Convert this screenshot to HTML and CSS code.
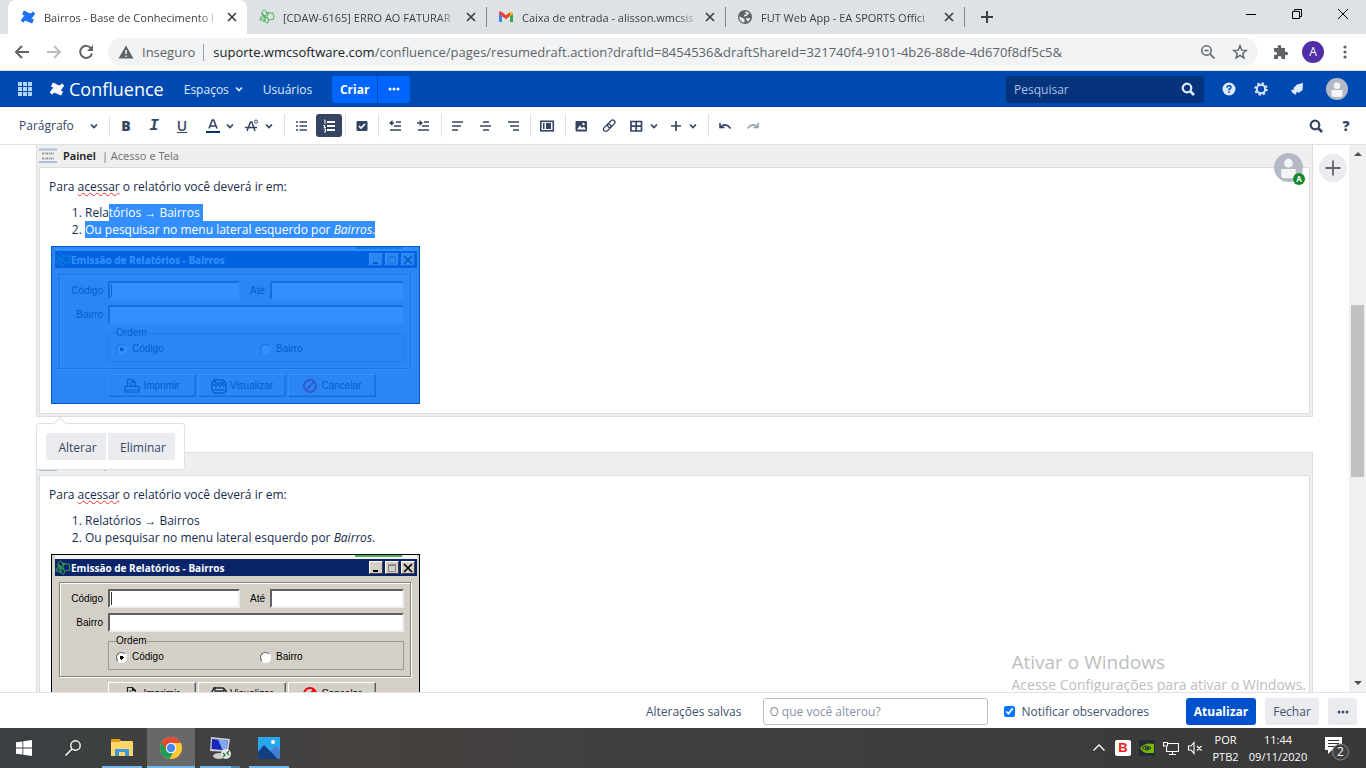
FILE: index.html
```html
<!DOCTYPE html>
<html lang="pt-BR">
<head>
<meta charset="utf-8">
<title>Bairros - Base de Conhecimento</title>
<link rel="stylesheet" href="styles.css">
</head>
<body>
<svg class="defs" aria-hidden="true">
  <symbol id="confluence" viewBox="0 0 16 16"><path d="M.8 11.6 2.7 8.500C4.800 5.300 6.900 7 9 8.100l5 2.300-1.800 4.200c-2.600-1.100-5-2.500-6.500-2.900-1.300-.2-1.800.9-2.500 2z"/><path d="m15.200 4.400-1.900 3.100C11.200 10.700 9.100 9 7 7.900L2 5.600l1.800-4.200c2.600 1.100 5 2.500 6.500 2.900 1.300.2 1.800-.9 2.500-2z"/></symbol>
  <symbol id="leaf" viewBox="0 0 16 16"><g fill="none" stroke-width=".9"><path d="M6 7C2 7 2 3 5 1c3 1 4 4 1 6zM6 7C3 6 1 8 1 11c3 1 6-1 5-4zM8 8l1-4 5 0 1 6-5 1zM6 8c-1 3 0 6 3 6 1-2 0-5-3-6zM3 4l3 3M2 10l4-3M7 3l3 1M4 13l3-2"/></g></symbol>
  <symbol id="x" viewBox="0 0 10 10"><path d="m1 1 8 8M9 1 1 9" fill="none" stroke="currentColor" stroke-width="1.700"/></symbol>
  <symbol id="chev" viewBox="0 0 8 8"><path d="m1 2.500 3 3 3-3" fill="none" stroke="currentColor" stroke-width="1.700"/></symbol>
  <symbol id="mag" viewBox="0 0 16 16"><path d="m10.500 10.500 3.500 3.500" stroke="currentColor" stroke-width="2.600"/><circle cx="7" cy="7" r="4.300" fill="none" stroke="currentColor" stroke-width="2.200"/></symbol>
  <symbol id="person" viewBox="0 0 30 30"><circle cx="15" cy="15" r="15" fill="#b3bac5"/><circle cx="15" cy="10.500" r="4.500" fill="#f4f5f7"/><path d="M7.500 16.500h15v6.500q0 3-3 3h-9q-3 0-3-3z" fill="#f4f5f7"/></symbol>
  <symbol id="printer" viewBox="0 0 16 16"><path d="M3.500 8.500V1.500h5l3 3v4M8.500 1.500v3h3M5.500 5h2M5.500 7h4M1 8.500h14v5.500H1zM1 12h14" fill="#d4d0c8" stroke="#222" stroke-width="1.200"/><path d="M2 12.800h12" stroke="#a77"/></symbol>
  <symbol id="preview" viewBox="0 0 16 16"><path d="M3 2h9l3 3v8l-3 2H3l-2-3V6z" fill="#eee" stroke="#222" stroke-width="1.600"/><path d="M4 1v4h9V2M2 7h12M4 9h2m2 0h2m2 0h1M3 12h10" fill="none" stroke="#222" stroke-width="1.300"/></symbol>
  <symbol id="forbid" viewBox="0 0 16 16"><g fill="none" stroke="#f00000" stroke-width="2"><circle cx="8" cy="8" r="6"/><path d="m12 4-8 8"/></g></symbol>
  <symbol id="min" viewBox="0 0 10 10"><path d="M2 8h5" stroke="#000" stroke-width="2"/></symbol>
  <symbol id="max" viewBox="0 0 10 10"><path d="M1.500 1.500h7v7h-7zM1 2.500h8" fill="none" stroke="#888"/></symbol>
</svg>

<header class="tabs">
  <div class="tab active"><svg class="i16 blue"><use href="#confluence"/></svg><span>Bairros - Base de Conhecimento I</span><button aria-label="Fechar guia"><svg><use href="#x"/></svg></button></div>
  <div class="tab"><svg class="i16 green"><use href="#leaf"/></svg><span>[CDAW-6165] ERRO AO FATURAR</span><button aria-label="Fechar guia"><svg><use href="#x"/></svg></button></div>
  <div class="tab sep"><svg class="i16" viewBox="0 0 16 16"><path d="M1 4v9h3V7z" fill="#4285f4"/><path d="M15 4v9h-3V7z" fill="#34a853"/><path d="M1 3.500Q2.500 1.500 4 3l4 3.300L12 3v4l-4 3.300L1 5z" fill="#ea4335"/><path d="m12 3 3 .500V5l-3 2.300z" fill="#fbbc04"/></svg><span>Caixa de entrada - alisson.wmcsis</span><button aria-label="Fechar guia"><svg><use href="#x"/></svg></button></div>
  <div class="tab sep"><svg class="i16" viewBox="0 0 16 16"><circle cx="8" cy="8" r="7" fill="#5f6368"/><path d="M2.500 7.500 6 9l1.500 1v3.500C4 13.500 2 11 2.500 7.500zM8 2.500c2-.3 4 1 4.700 2.500H11L10 7l-3 .5V5.800h2zM9 9h3.500l.8.800c-.5 1.500-2 2.700-3 3z" fill="#dee1e6"/></svg><span>FUT Web App - EA SPORTS Offici</span><button aria-label="Fechar guia"><svg><use href="#x"/></svg></button></div>
  <button class="newtab" aria-label="Nova guia"><svg class="i16" viewBox="0 0 16 16"><path d="M8 2v12M2 8h12" stroke="#3c4043" stroke-width="2"/></svg></button>
  <div class="winbtns">
    <button aria-label="Minimizar"><svg class="i16" viewBox="0 0 16 16"><path d="M3 8.500h10" stroke="#000"/></svg></button>
    <button aria-label="Restaurar"><svg class="i16" viewBox="0 0 16 16"><path d="M3.500 5.500h7v7h-7zM5.500 5.500v-2h7v7h-2" fill="none" stroke="#000"/></svg></button>
    <button aria-label="Fechar"><svg class="i16" viewBox="0 0 16 16"><path d="m3 3 10 10M13 3 3 13" stroke="#000"/></svg></button>
  </div>
</header>

<nav class="address">
  <button aria-label="Voltar"><svg class="i16" viewBox="0 0 16 16"><path d="M15 8H2m6-6L2 8l6 6" fill="none" stroke="#5f6368" stroke-width="2"/></svg></button>
  <button aria-label="Avançar"><svg class="i16" viewBox="0 0 16 16"><path d="M1 8h13M8 2l6 6-6 6" fill="none" stroke="#babcbe" stroke-width="2"/></svg></button>
  <button aria-label="Recarregar"><svg class="i16" viewBox="0 0 16 16"><path d="M13.200 4.500A6 6 0 1 0 14 9.500" fill="none" stroke="#5f6368" stroke-width="2"/><path d="M15 1v6H9z" fill="#5f6368"/></svg></button>
  <div class="omnibox">
    <svg class="i16" viewBox="0 0 16 16"><path d="M8 1.500 15.500 14.500H.5z" fill="#5f6368"/><path d="M8 6v4M8 11.500v1.500" stroke="#f1f3f4" stroke-width="1.500"/></svg>
    <span class="insecure">Inseguro</span>
    <span class="url"><b>suporte.wmcsoftware.com</b>/confluence/pages/resumedraft.action?draftId=8454536&amp;draftShareId=321740f4-9101-4b26-88de-4d670f8df5c5&amp;</span>
    <button aria-label="Zoom"><svg class="i16" viewBox="0 0 16 16"><circle cx="6.500" cy="6.500" r="4.700" fill="none" stroke="#5f6368" stroke-width="1.500"/><path d="m10 10 4.500 4.500M4.500 6.500h4" stroke="#5f6368" stroke-width="1.700"/></svg></button>
    <button aria-label="Favorito"><svg class="i16" viewBox="0 0 16 16"><path d="m8 1.800 1.700 4.300 4.600.3-3.500 3 1.100 4.500L8 11.400l-3.900 2.500 1.100-4.500-3.500-3 4.600-.3z" fill="none" stroke="#5f6368" stroke-width="1.400"/></svg></button>
  </div>
  <button aria-label="Extensões"><svg class="i16" viewBox="0 0 16 16"><path d="M1 4h4q-1-3 1.500-3T8 4h4v4q3-1 3 1.500T12 11v4H8.500q.5-3-1.800-3T5 15H1v-4q3 .5 3-1.500T1 7.800z" fill="#5f6368"/></svg></button>
  <button aria-label="Perfil"><span class="profile">A</span></button>
  <button aria-label="Menu"><svg class="i16" viewBox="0 0 16 16" fill="#5f6368"><circle cx="8" cy="3" r="1.600"/><circle cx="8" cy="8" r="1.600"/><circle cx="8" cy="13" r="1.600"/></svg></button>
</nav>

<header class="app">
  <button class="grid" aria-label="Aplicativos"><svg class="i16" viewBox="0 0 16 16" fill="#b3d4ff"><path d="M1 1h4v4H1zM6 1h4v4H6zM11 1h4v4h-4zM1 6h4v4H1zM6 6h4v4H6zM11 6h4v4h-4zM1 11h4v4H1zM6 11h4v4H6zM11 11h4v4h-4z"/></svg></button>
  <a class="logo" href="#"><svg class="i16"><use href="#confluence"/></svg>Confluence</a>
  <a href="#">Espaços<svg class="chev"><use href="#chev"/></svg></a>
  <a href="#">Usuários</a>
  <div class="create"><button>Criar</button><button aria-label="Mais"><svg class="i16" viewBox="0 0 16 16" fill="#fff"><circle cx="4" cy="8" r="1.500"/><circle cx="8" cy="8" r="1.500"/><circle cx="12" cy="8" r="1.500"/></svg></button></div>
  <label class="search"><input type="text" placeholder="Pesquisar" aria-label="Pesquisar"><svg class="i16"><use href="#mag"/></svg></label>
  <div class="appicons">
    <button aria-label="Ajuda"><svg class="i16" viewBox="0 0 16 16"><circle cx="8" cy="8" r="6.500" fill="#deebff"/><path d="M6 6.700Q6 4.800 8 4.800t2 1.700Q10 7.700 8 8.300V9.500M8 10.500V12" fill="none" stroke="#0049b0" stroke-width="1.500"/></svg></button>
    <button aria-label="Configurações"><svg class="i16" viewBox="0 0 16 16" fill="none" stroke="#deebff"><circle cx="8" cy="8" r="4.200" stroke-width="2"/><circle cx="8" cy="8" r="5.800" stroke-width="1.800" stroke-dasharray="2.280 2.280"/></svg></button>
    <button class="notice" aria-label="Notificações"><svg class="i16" viewBox="0 0 16 16" fill="#deebff"><path d="m14 2-.5 7-4 3-1.500-1.500L6.500 14 5 12.500 3.500 12 2 9l3-.5L4.500 7 8 3.500z"/></svg></button>
    <button class="account" aria-label="Conta"><svg class="face"><use href="#person"/></svg></button>
  </div>
</header>

<div class="toolbar">
  <button class="format">Parágrafo<svg class="chev"><use href="#chev"/></svg></button>
  <div class="group wide">
    <button class="glyph"><b>B</b></button>
    <button class="glyph mono"><i>I</i></button>
    <button class="glyph"><u>U</u></button>
    <button class="combo spaced" aria-label="Cor"><svg class="i16" viewBox="0 0 16 16"><path d="M4 10.500 7.300 2h1.400L12 10.500M5.500 8h5" fill="none" stroke="currentColor" stroke-width="1.600"/><path d="M1 14h14" stroke="#003366" stroke-width="2"/></svg><svg class="chev"><use href="#chev"/></svg></button>
    <button class="combo" aria-label="Mais formatos"><svg class="i16" viewBox="0 0 16 16" fill="none" stroke="currentColor"><path d="M3 13 6.500 4h1.300L11 13M1 9.500h12" stroke-width="1.400"/><circle cx="12" cy="3.500" r="1.500"/></svg><svg class="chev"><use href="#chev"/></svg></button>
  </div>
  <div class="group">
    <button aria-label="Marcadores"><svg class="i16" viewBox="0 0 16 16"><path d="M3 4h2m1.500 0H14M3 8h2m1.500 0H14M3 12h2m1.500 0H14" stroke="currentColor" stroke-width="1.600"/></svg></button>
    <button class="on" aria-label="Numeração"><svg class="i16" viewBox="0 0 16 16"><path d="M6 4h8M6 8h8M6 12h8" stroke="currentColor" stroke-width="2"/><path d="M3 2h1v4M2.500 7.500H4L3 9.500h2M3 11h1.500v3H3" fill="none" stroke="currentColor"/></svg></button>
  </div>
  <div class="group"><button aria-label="Tarefas"><svg class="i16" viewBox="0 0 16 16"><rect x="2.500" y="3" width="11" height="10" rx="1" fill="currentColor"/><path d="m5 8 2 2 4-4" fill="none" stroke="#fff" stroke-width="1.600"/></svg></button></div>
  <div class="group end">
    <button aria-label="Diminuir recuo"><svg class="i16" viewBox="0 0 16 16"><path d="M9 4h5M7 8h7M3 12h11M3 5h4" stroke="currentColor" stroke-width="1.600"/><path d="M5.500 2v6L2 5z" fill="currentColor"/></svg></button>
    <button aria-label="Aumentar recuo"><svg class="i16" viewBox="0 0 16 16"><path d="M9 4h5M7 8h7M3 12h11M2 5h4" stroke="currentColor" stroke-width="1.600"/><path d="M4.500 2v6L8 5z" fill="currentColor"/></svg></button>
  </div>
  <div class="group">
    <button aria-label="Esquerda"><svg class="i16" viewBox="0 0 16 16"><path d="M2 4h11M2 8h9M2 12h6" stroke="currentColor" stroke-width="1.700"/></svg></button>
    <button aria-label="Centro"><svg class="i16" viewBox="0 0 16 16"><path d="M5 4h6M2 8h11M5 12h6" stroke="currentColor" stroke-width="1.700"/></svg></button>
    <button aria-label="Direita"><svg class="i16" viewBox="0 0 16 16"><path d="M2 4h11M4 8h9M7 12h6" stroke="currentColor" stroke-width="1.700"/></svg></button>
  </div>
  <div class="group end"><button aria-label="Layout"><svg class="i16" viewBox="0 0 16 16"><rect x="1.800" y="3.300" width="12.500" height="9.500" fill="none" stroke="currentColor" stroke-width="1.600"/><path d="M4 5h1.500v6H4zM7 5h5v6H7z" fill="currentColor"/></svg></button></div>
  <div class="group wide">
    <button aria-label="Imagem"><svg class="i16" viewBox="0 0 16 16"><rect x="1.500" y="3" width="11.500" height="10.500" rx="1" fill="currentColor"/><path d="m3 11.500 3-4 2 2.500 2-1.500 2 3z" fill="#fff"/><circle cx="9.500" cy="6" r="1.200" fill="#fff"/></svg></button>
    <button aria-label="Link"><svg class="i16" viewBox="0 0 16 16" fill="none" stroke="currentColor" stroke-width="1.300"><rect x="5" y="3.500" width="8.500" height="4.500" rx="2.200" transform="rotate(-45 9.250 5.750)"/><rect x="1" y="7.500" width="8.500" height="4.500" rx="2.200" transform="rotate(-45 5.250 9.750)"/></svg></button>
    <button class="combo" aria-label="Tabela"><svg class="i16" viewBox="0 0 16 16"><path d="M2 3.500h10.500V13H2zM7.200 3v10M2 8.200h10" fill="none" stroke="currentColor" stroke-width="1.700"/></svg><svg class="chev"><use href="#chev"/></svg></button>
    <button class="combo" aria-label="Inserir"><svg class="i16" viewBox="0 0 16 16"><path d="M8 3v10M3 8h10" stroke="currentColor" stroke-width="1.700"/></svg><svg class="chev"><use href="#chev"/></svg></button>
  </div>
  <div class="group last">
    <button aria-label="Desfazer"><svg class="i16" viewBox="0 0 16 16"><path d="M3 5v4.500h4.500M3.500 9Q9 4 13.500 10.500" fill="none" stroke="currentColor" stroke-width="1.600"/></svg></button>
    <button class="dim" aria-label="Refazer"><svg class="i16" viewBox="0 0 16 16"><path d="M13 5v4.500H8.500M12.500 9Q7 4 2.500 10.500" fill="none" stroke="currentColor" stroke-width="1.600"/></svg></button>
  </div>
  <div class="tools"><button aria-label="Localizar"><svg class="i16"><use href="#mag"/></svg></button><button class="glyph"><b>?</b></button></div>
</div>

<main class="editor">
  <div class="doc">
    <section class="panel first">
      <h2><svg class="macro" viewBox="0 0 18 16"><path d="M0 1.500h18M0 14h18" stroke="#a8c0e0" stroke-width="2"/><path d="M3 5.500h12M3 10.500h12" stroke="#999" stroke-width="2" stroke-dasharray="2 .7 1 .5"/></svg><b>Painel</b><span>| Acesso e Tela</span></h2>
      <div class="body">
        <p>Para <span class="spell">acessar</span> o relatório você deverá ir em:</p>
        <ol><li>Rela<span class="sel">tórios → Bairros&nbsp;</span></li><li><span class="sel">Ou pesquisar no menu lateral esquerdo por <i>Bairros</i>.</span></li></ol>
        <div class="shot selected">
          <div class="strip"></div>
          <div class="caption"><svg class="i16 green"><use href="#leaf"/></svg><b>Emissão de Relatórios - Bairros</b><button aria-label="Minimizar"><svg><use href="#min"/></svg></button><button aria-label="Maximizar"><svg><use href="#max"/></svg></button><button aria-label="Fechar"><svg><use href="#x"/></svg></button></div>
          <div class="frame">
            <div class="row"><label for="c1">Código</label><input class="short" id="c1" type="text"><label class="mid" for="a1">Até</label><input id="a1" type="text"></div>
            <div class="row"><label for="b1">Bairro</label><input id="b1" type="text"></div>
            <fieldset><legend>Ordem</legend><label><input type="radio" name="o1" checked>Código</label><label><input type="radio" name="o1">Bairro</label></fieldset>
          </div>
          <div class="actions"><button><svg class="i16"><use href="#printer"/></svg>Imprimir</button><button><svg class="i16"><use href="#preview"/></svg>Visualizar</button><button><svg class="i16"><use href="#forbid"/></svg>Cancelar</button></div>
        </div>
      </div>
      <div class="popover"><button>Alterar</button><button>Eliminar</button></div>
    </section>
    <section class="panel">
      <h2><svg class="macro" viewBox="0 0 18 16"><path d="M0 1.500h18M0 14h18" stroke="#a8c0e0" stroke-width="2"/><path d="M3 5.500h12M3 10.500h12" stroke="#999" stroke-width="2" stroke-dasharray="2 .7 1 .5"/></svg><b>Painel</b><span>| Acesso e Tela</span></h2>
      <div class="body">
        <p>Para <span class="spell">acessar</span> o relatório você deverá ir em:</p>
        <ol><li>Relatórios → Bairros</li><li>Ou pesquisar no menu lateral esquerdo por <i>Bairros</i>.</li></ol>
        <div class="shot">
          <div class="strip"></div>
          <div class="caption"><svg class="i16 green"><use href="#leaf"/></svg><b>Emissão de Relatórios - Bairros</b><button aria-label="Minimizar"><svg><use href="#min"/></svg></button><button aria-label="Maximizar"><svg><use href="#max"/></svg></button><button aria-label="Fechar"><svg><use href="#x"/></svg></button></div>
          <div class="frame">
            <div class="row"><label for="c2">Código</label><input class="short" id="c2" type="text"><label class="mid" for="a2">Até</label><input id="a2" type="text"></div>
            <div class="row"><label for="b2">Bairro</label><input id="b2" type="text"></div>
            <fieldset><legend>Ordem</legend><label><input type="radio" name="o2" checked>Código</label><label><input type="radio" name="o2">Bairro</label></fieldset>
          </div>
          <div class="actions"><button><svg class="i16"><use href="#printer"/></svg>Imprimir</button><button><svg class="i16"><use href="#preview"/></svg>Visualizar</button><button><svg class="i16"><use href="#forbid"/></svg>Cancelar</button></div>
        </div>
      </div>
    </section>
  </div>
  <div class="presence"><svg><use href="#person"/></svg><span>A</span></div>
  <button class="add" aria-label="Convidar"><svg class="i16" viewBox="0 0 16 16"><path d="M8 .5v15M.5 8h15" stroke="#666" stroke-width="1.800"/></svg></button>
  <div class="scroll"><svg class="chev" viewBox="0 0 8 8"><path d="m0 6 4-4 4 4z" fill="#505050"/></svg><div class="track"><div class="thumb"></div></div><svg class="chev" viewBox="0 0 8 8"><path d="m0 2 4 4 4-4z" fill="#505050"/></svg></div>
  <div class="watermark"><p>Ativar o Windows</p><span>Acesse Configurações para ativar o Windows.</span></div>
</main>

<footer class="save">
  <span>Alterações salvas</span>
  <input type="text" placeholder="O que você alterou?" aria-label="O que você alterou?">
  <label><input type="checkbox" checked>Notificar observadores</label>
  <button class="primary">Atualizar</button><button>Fechar</button>
  <button class="more" aria-label="Mais"><svg class="i16" viewBox="0 0 16 16" fill="#42526e"><circle cx="4" cy="8" r="1.500"/><circle cx="8" cy="8" r="1.500"/><circle cx="12" cy="8" r="1.500"/></svg></button>
</footer>

<footer class="taskbar">
  <button aria-label="Iniciar"><svg class="i16" viewBox="0 0 16 16" fill="#fff"><path d="M0 2.300 6.500 1.400V7.600H0zM7.300 1.300 16 0v7.600H7.300zM0 8.400h6.500v6.200L0 13.700zM7.300 8.400H16V16l-8.700-1.200z"/></svg></button>
  <button aria-label="Pesquisar"><svg class="i16" viewBox="0 0 16 16" fill="none" stroke="#fff" stroke-width="1.400"><circle cx="10.500" cy="5.500" r="4.700"/><path d="M7 9 .5 15.500"/></svg></button>
  <button class="run" aria-label="Explorador"><svg class="i22" viewBox="0 0 22 22"><path d="M0 3q0-1 1-1h7l2 2h11q1 0 1 1v14H0z" fill="#ffd667"/><path d="M0 2h9v3H0z" fill="#e0a010"/><path d="M4 19v-7h14v7h-4v-4H8v4z" fill="#3d99dd"/></svg></button>
  <button class="run current" aria-label="Chrome"><svg class="i22" viewBox="0 0 22 22"><circle cx="11" cy="11" r="11" fill="#fbc934"/><path d="M11 11 1.500 5.500A11 11 0 0 0 9.500 22l5-9z" fill="#1e9c58"/><path d="M1.500 5.500a11 11 0 0 1 19 0V6H11L6.300 13.500z" fill="#de4b3b"/><circle cx="11" cy="11" r="5.200" fill="#fff"/><circle cx="11" cy="11" r="4.200" fill="#4688f1"/></svg></button>
  <button class="run stacked" aria-label="Área remota"><svg class="i22" viewBox="0 0 22 22"><path d="M2 0 21 2 19 15 1 14z" fill="#ccd0d5"/><path d="m3 2 16 1.500-1.500 10L2.500 12z" fill="#1826bd"/><path d="m9 2.500 10 1-1.500 10-4-.5z" fill="#82a8f0"/><ellipse cx="10" cy="19" rx="6" ry="3" fill="#ccc"/><circle cx="17" cy="17" r="5" fill="#e8e8e8"/><path d="m14 16 2 2-2 2m6-6-2 2 2 2" stroke="#28843d" fill="none" stroke-width="1.500"/></svg></button>
  <button class="run" aria-label="Fotos"><svg class="i22" viewBox="0 0 22 22"><path d="M0 0h22v22H0z" fill="#2aa7ec"/><path d="m12 14 6-5 4 5v8H9z" fill="#477bd0"/><path d="m0 15 6-7 14 14H0z" fill="#123f82"/><circle cx="15" cy="5" r="2" fill="#fff"/></svg></button>
  <div class="tray">
    <svg class="i16" viewBox="0 0 16 16"><path d="m2.500 10.500 5.500-5.500 5.500 5.500" fill="none" stroke="#fff" stroke-width="1.300"/></svg>
    <span class="bit">B</span>
    <svg class="i16" viewBox="0 0 16 16"><path d="M0 0h16v16H0z" fill="#252a38"/><path d="M1 8q5-6 14-4v9H7Q3 12 1 8z" fill="#76b900"/><path d="M3 8q4-4 9 0-4 4-9 0zm3 0q2-2 4 0-2 2-4 0z" fill="none" stroke="#252a38"/></svg>
    <svg class="i16" viewBox="0 0 16 16"><path d="M5 3.500h10.500v8H3.500V7M9.500 11.500v3M6 14.500h7M.5 2.500h4V6h-4z" fill="none" stroke="#fff" stroke-width="1.100"/></svg>
    <svg class="i16" viewBox="0 0 16 16"><path d="M1.500 6H4l3-3.500v11L4 10H1.500zM10 6l4.500 4.500M14.500 6 10 10.500" fill="none" stroke="#fff" stroke-width="1.100"/></svg>
    <div class="lang">POR<br>PTB2</div><div class="clock">11:44<br>09/11/2020</div>
    <svg class="note" viewBox="0 0 26 26"><path d="M1 2h17v13H8l-4 4v-4H1z" fill="#fff"/><path d="M4 5.500h11M4 8.500h11M4 11.500h8" stroke="#333"/><circle cx="16.500" cy="17" r="8" fill="#414141" stroke="#888"/><text x="16.500" y="21" text-anchor="middle" fill="#fff">2</text></svg>
  </div>
</footer>
</body>
</html>
```

FILE: styles.css
```css
* { box-sizing: border-box; }
body { margin: 0; height: 100vh; display: flex; flex-direction: column; overflow: hidden; background: #fff; color: #172b4d; font: 12px/17px "Open Sans", sans-serif; }
button, input { font: inherit; color: inherit; }
button { border: 0; padding: 0; margin: 0; background: none; display: flex; align-items: center; justify-content: center; flex: none; }
a { color: inherit; text-decoration: none; }
svg { flex: none; }
.defs { position: absolute; width: 0; height: 0; }
.i16 { width: 16px; height: 16px; }
.i22 { width: 22px; height: 22px; }
.chev { width: 8px; height: 8px; }
.blue { fill: #2073f0; }
.green { stroke: #3db04b; }

.tabs { display: flex; flex: none; height: 34px; padding-left: 8px; background: #dee1e6; font-size: 11px; color: #3c4043; }
.tab { display: flex; align-items: center; gap: 8px; flex: 0 1 239px; min-width: 0; padding: 0 7px 0 12px; }
.tab span { flex: 1; overflow: hidden; white-space: nowrap; -webkit-mask-image: linear-gradient(90deg, #000 88%, transparent); mask-image: linear-gradient(90deg, #000 88%, transparent); }
.tab button { width: 16px; height: 16px; margin-left: -4px; }
.tab svg:not(.i16) { width: 10px; height: 10px; }
.tab.active { background: #fff; border-radius: 8px 8px 0 0; }
.tab.sep { background: linear-gradient(#80868b, #80868b) left center / 1px 20px no-repeat; }
.newtab { width: 44px; border-left: 1px solid #80868b; height: 20px; align-self: center; }
.winbtns { display: flex; margin-left: auto; height: 28px; }
.winbtns button { width: 46px; }

.address { display: flex; align-items: center; flex: none; height: 37px; padding: 0 5px 0 6px; border-bottom: 1px solid #dadce0; color: #5f6368; font-size: 13px; }
.address button { width: 32px; height: 28px; }
.omnibox { display: flex; align-items: center; flex: 1; min-width: 0; height: 28px; margin: 0 7px 0 6px; padding: 0 2px 0 10px; border-radius: 14px; background: #f1f3f4; }
.insecure { padding: 0 8px; border-right: 1px solid #9aa0a6; }
.url { flex: 1; min-width: 0; overflow: hidden; white-space: nowrap; padding-left: 9px; }
.url b { font-weight: 400; color: #202124; }
.profile { width: 22px; height: 22px; border-radius: 50%; background: #512da8; color: #fff; font-size: 12px; line-height: 22px; }

.app { display: flex; align-items: center; flex: none; height: 36px; padding: 0 9px 0 17px; background: #0049b0; color: #deebff; }
.app a { display: flex; align-items: center; gap: 6px; margin-right: 20px; }
.app .logo { margin: 0 20px 0 16px; gap: 4px; color: #fff; fill: #fff; font-size: 18px; }
.create { display: flex; gap: 1px; height: 27px; color: #fff; font-weight: 700; }
.create button { width: 45px; background: #0065ff; border-radius: 3px 0 0 3px; }
.create button + button { width: 32px; border-radius: 0 3px 3px 0; }
.search { display: flex; align-items: center; width: 198px; height: 27px; margin-left: auto; padding: 0 8px; border-radius: 3px; background: #05347c; }
.search input { flex: 1; min-width: 0; padding: 0; border: 0; background: none; }
.search input::placeholder { color: #a9c1e8; }
.appicons { display: flex; align-items: center; margin-left: 9px; }
.appicons button { width: 32px; }
.appicons .notice, .appicons .account { width: 40px; }
.face { width: 22px; height: 22px; }

.toolbar { display: flex; align-items: center; flex: none; height: 38px; border-bottom: 1px solid #dfe1e6; color: #344563; }
.format { width: 110px; height: 22px; padding: 0 11px 0 19px; justify-content: space-between; border-right: 1px solid #dfe1e6; }
.group { display: flex; padding: 0 2px; border-right: 1px solid #dfe1e6; }
.group.wide { padding-right: 6px; }
.group.end { padding-right: 4px; }
.group.last { border: 0; }
.toolbar .group button { width: 26px; height: 23px; margin: 0 1px; border-radius: 3px; }
.toolbar .group .combo { width: 39px; gap: 5px; margin: 0; }
.toolbar .group .spaced { margin-left: 4px; }
.toolbar .glyph { font-size: 14px; font-weight: 600; }
.toolbar .mono { font: 700 16px/16px "Liberation Mono", monospace; }
.group .on { background: #344563; color: #fff; }
.dim { opacity: .5; }
.tools { display: flex; margin-left: auto; padding-right: 5px; }
.tools button { width: 30px; }

.editor { position: relative; flex: 1; min-height: 0; display: flex; overflow: hidden; }
.doc { flex: 1; min-width: 0; padding: 0 36px; }
.panel { position: relative; border: 1px solid #ddd; background: #efefef; padding: 0 2px 2px; margin-bottom: 35px; }
.panel.first { margin-top: -1px; z-index: 1; }
.panel h2 { display: flex; align-items: center; gap: 6px; height: 22px; margin: 0; font: 11px/16px "Noto Sans", sans-serif; color: #777; }
.panel h2 b { font-weight: 600; color: #222; }
.macro { width: 18px; height: 16px; }
.body { border: 1px solid #ddd; background: #fff; padding: 10px 9px 9px; }
.body p { margin: 0 0 9px; }
.body ol { margin: 0 0 8px; padding-left: 36px; }
.spell { text-decoration: underline wavy #e33 1px; text-underline-offset: 1px; }
.sel { display: inline-block; background: #338fff; color: #fff; }

.shot { position: relative; width: 369px; height: 158px; margin-left: 2px; padding: 0 2px 0 3px; border: 1px solid #000; background: #d4d0c8; color: #000; font: 10px/12px "Liberation Sans", Arial, sans-serif; }
.shot.selected::after { content: ""; position: absolute; inset: -1px; background: rgba(0, 115, 255, .8); }
.strip { height: 4px; background: linear-gradient(#4caf50, #4caf50) 300px 0 / 47px 2px no-repeat, #f2f2f2; }
.caption { display: flex; align-items: center; height: 17px; padding-right: 2px; background: #0a246a; color: #fff; font: 10px/12px "Open Sans", sans-serif; }
.caption b { flex: 1; }
.caption button { width: 14px; height: 13px; margin-left: 2px; border: 1px solid; border-color: #fff #404040 #404040 #fff; background: #d4d0c8; color: #000; }
.caption button svg { width: 10px; height: 10px; }
.frame { margin: 6px 6px 5px 4px; padding: 6px 6px 6px 0; border: 1px solid #808080; box-shadow: 1px 1px #fff, inset 1px 1px #fff; }
.row { display: flex; align-items: center; margin-bottom: 5px; }
.row label { width: 48px; padding-right: 5px; text-align: right; }
.row .mid { width: 30px; }
.row input { flex: 1; min-width: 0; height: 19px; border: 2px solid; border-color: #606060 #eee #eee #606060; background: #fff; }
.row .short { flex: 0 0 132px; background: linear-gradient(#333, #333) 1px center / 1px 13px no-repeat, #fff; }
.frame fieldset { display: flex; align-items: center; height: 35px; margin: -2px 0 0 48px; padding: 0 7px 2px; border: 1px solid #999; }
.frame legend { padding: 0; }
.frame fieldset label { display: flex; align-items: center; gap: 5px; }
.frame fieldset label:first-of-type { width: 144px; }
.frame input[type=radio] { appearance: none; width: 11px; height: 11px; margin: 0; border: 1px solid; border-color: #606060 #fff #fff #606060; border-radius: 50%; background: #fff; }
.frame input[type=radio]:checked { background: radial-gradient(#000 2px, #fff 2px); }
.actions { display: flex; gap: 2px; padding-left: 53px; }
.actions button { width: 88px; height: 23px; gap: 3px; border: 1px solid; border-color: #fff #606060 #606060 #fff; box-shadow: inset -1px -1px #999; }

.popover { position: absolute; left: -1px; top: 100%; margin-top: 7px; display: flex; gap: 2px; padding: 9px; border: 1px solid #dfe1e6; border-radius: 3px; background: #fff; color: #344563; }
.popover::before { content: ""; position: absolute; left: 18px; top: -5px; width: 9px; height: 9px; background: #fff; border: 1px solid #dfe1e6; border-width: 1px 0 0 1px; transform: rotate(45deg); }
.popover button { width: 60px; height: 27px; padding: 2px 0 0 3px; background: #ebecf0; border-radius: 3px 0 0 3px; }
.popover button + button { width: 67px; border-radius: 0 3px 3px 0; }
.presence { position: absolute; right: 63px; top: 8px; width: 29px; height: 29px; z-index: 2; }
.presence svg { width: 29px; height: 29px; }
.presence span { position: absolute; right: -2px; bottom: -3px; width: 12px; height: 12px; border-radius: 50%; background: #14892c; color: #fff; text-align: center; font: 700 8px/12px "Open Sans", sans-serif; }
.add { position: absolute; right: 19px; top: 9px; width: 28px; height: 28px; border-radius: 50%; background: #ebecf0; }
.scroll { display: flex; flex-direction: column; align-items: center; width: 17px; padding: 5px 0; background: #f0f0f0; }
.track { flex: 1; width: 13px; padding-top: 147px; }
.thumb { height: 172px; background: #c1c1c1; }
.watermark { position: absolute; right: 60px; bottom: -2px; color: #bdbdbd; font-size: 14px; line-height: 18px; z-index: 3; }
.watermark p { margin: 0; font-size: 19px; line-height: 28px; }

.save { display: flex; align-items: center; flex: none; justify-content: flex-end; height: 36px; padding: 2px 9px 0; border-top: 1px solid #dfe1e6; color: #42526e; }
.save input[type=text] { width: 225px; height: 27px; margin: 0 16px 0 22px; padding: 0 5px; border: 1px solid #b8bfca; border-radius: 3px; }
.save input::placeholder { color: #8993a4; }
.save label { display: flex; align-items: center; gap: 6px; margin-right: 37px; }
.save input[type=checkbox] { width: 11px; height: 11px; margin: 0; }
.save button { width: 54px; height: 27px; margin-left: 9px; border-radius: 3px; background: #ebecf0; }
.save .primary { width: 70px; margin: 0; background: #0052cc; color: #fff; font-weight: 700; }
.save .more { width: 29px; }

.taskbar { display: flex; flex: none; gap: 1px; height: 40px; background: linear-gradient(90deg, #3a3f41, #454240 25%, #3d3d3c 70%, #393939); color: #fff; font-size: 11px; line-height: 17px; }
.taskbar button { width: 48px; }
.taskbar .run { background: linear-gradient(#76b9ed, #76b9ed) center bottom / 40px 2px no-repeat; }
.taskbar .current { background: linear-gradient(#76b9ed, #76b9ed) center bottom / 48px 2px no-repeat, #686868; }
.taskbar .stacked { background-image: linear-gradient(90deg, #76b9ed 31px, #5583a8 31px); }
.tray { display: flex; align-items: center; gap: 8px; margin-left: auto; padding-right: 16px; text-align: center; }
.bit { width: 16px; height: 16px; border-radius: 2px; background: #fff; color: #e21; font: 700 13px/16px "Liberation Sans", sans-serif; }
.lang { width: 29px; }
.clock { width: 60px; }
.note { width: 26px; height: 26px; margin-left: 8px; font-size: 12px; }
```
